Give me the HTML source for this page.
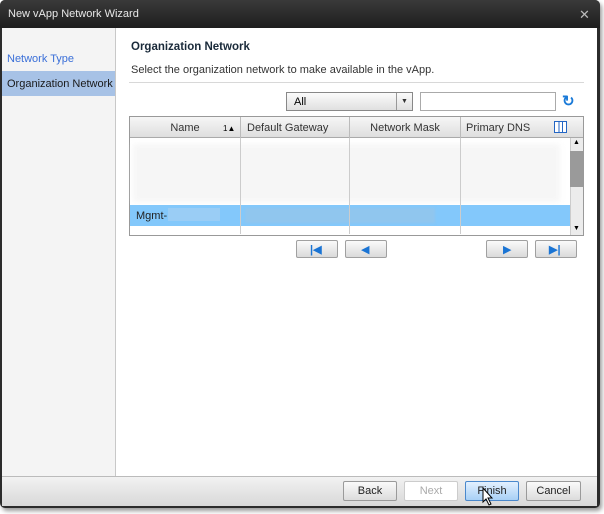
<!DOCTYPE html>
<html><head><style>
*{box-sizing:border-box;margin:0;padding:0}
body{width:604px;height:514px;background:#fff;font-family:"Liberation Sans",sans-serif;font-size:11px;position:relative;overflow:hidden}
.a{position:absolute}
.btn{position:absolute;height:20px;border:1px solid #9a9a9a;border-radius:2px;background:linear-gradient(#fafafa,#dcdcdc);text-align:center;line-height:18px;font-size:11px;color:#222}
.nb{position:absolute;top:240px;width:42px;height:18px;border:1px solid #a0a0a0;border-radius:2px;background:linear-gradient(#fafafa,#dadada)}
.th{position:absolute;top:0;height:21px;line-height:22px;color:#333;text-align:center;border-right:1px solid #bbb}
.vl{position:absolute;top:138px;height:96px;width:1px;background:#ccc}
</style></head><body>
<div class="a" style="left:0;top:0;width:600px;height:508px;background:#2b2b2b;border-radius:5px;box-shadow:2px 3px 4px rgba(0,0,0,.4)"></div>
<div class="a" style="left:0;top:0;width:600px;height:28px;background:linear-gradient(#3a3a3a,#1e1e1e);border-radius:5px 5px 0 0;color:#e8e8e8;font-size:11px;line-height:29px;padding-left:8px">New vApp Network Wizard</div>
<div class="a" style="left:579px;top:7px;color:#bbb;font-size:13px">✕</div>
<div class="a" style="left:2px;top:28px;width:595px;height:448px;background:#fff"></div>
<div class="a" style="left:2px;top:28px;width:114px;height:448px;background:#f4f4f4;border-right:1px solid #c8c8c8"></div>
<div class="a" style="left:7px;top:53px;color:#3a6fd8">Network Type</div>
<div class="a" style="left:2px;top:71px;width:113px;height:25px;background:#a7c2e6;line-height:26px;padding-left:5px;color:#1a1a1a">Organization Network</div>
<div class="a" style="left:131px;top:41px;font-weight:bold;font-size:11.5px;color:#1a2a3a">Organization Network</div>
<div class="a" style="left:131px;top:64px;color:#333">Select the organization network to make available in the vApp.</div>
<div class="a" style="left:129px;top:82px;width:455px;height:1px;background:#d8d8d8"></div>
<div class="a" style="left:286px;top:92px;width:127px;height:19px;border:1px solid #888;background:linear-gradient(#fbfbfb,#e0e0e0);line-height:18px;padding-left:7px">All</div>
<div class="a" style="left:396px;top:93px;width:1px;height:17px;background:#999"></div>
<div class="a" style="left:401px;top:92px;font-size:7px;line-height:19px;color:#333">▼</div>
<div class="a" style="left:420px;top:92px;width:136px;height:19px;border:1px solid #aaa;background:#fff"></div>
<div class="a" style="left:562px;top:92px;color:#1a7ad8;font-weight:bold;font-size:15px">↻</div>
<div class="a" style="left:129px;top:116px;width:455px;height:120px;border:1px solid #999;background:#fff">
 <div class="a" style="left:0;top:0;width:453px;height:21px;background:linear-gradient(#f6f6f6,#dedede);border-bottom:1px solid #aaa"></div>
 <div class="th" style="left:0;width:111px">Name</div>
 <div class="a" style="left:93px;top:1px;line-height:21px;font-size:8px">1▲</div>
 <div class="th" style="left:111px;width:109px;text-align:left;padding-left:6px">Default Gateway</div>
 <div class="th" style="left:220px;width:111px">Network Mask</div>
 <div class="th" style="left:331px;width:122px;border:0;text-align:left;padding-left:5px">Primary DNS</div>
 <div class="a" style="left:424px;top:4px;width:13px;height:12px;border:1px solid #2466c4;background:linear-gradient(90deg,#fff 30%,#2466c4 30%,#2466c4 40%,#fff 40%,#fff 62%,#2466c4 62%,#2466c4 72%,#fff 72%)"></div>
 <div class="a" style="left:3px;top:27px;width:427px;height:58px;background:#f6f6f6;filter:blur(3px)"></div>
 <div class="a" style="left:0;top:88px;width:440px;height:21px;background:#83c8fb"></div>
 <div class="a" style="left:6px;top:89px;line-height:21px;color:#222">Mgmt-</div>
 <div class="a" style="left:38px;top:91px;width:52px;height:13px;background:#9acdf5"></div>
 <div class="a" style="left:115px;top:91px;width:190px;height:15px;background:#90c6ee;filter:blur(1px)"></div>
 <div class="a" style="left:440px;top:21px;width:13px;height:97px;background:#ececec;border-left:1px solid #ccc"></div>
 <div class="a" style="left:440px;top:34px;width:13px;height:36px;background:#9a9a9a"></div>
 <div class="a" style="left:443px;top:22px;font-size:7px">▲</div>
 <div class="a" style="left:443px;top:108px;font-size:7px">▼</div>
</div>
<div class="vl" style="left:240px"></div><div class="vl" style="left:349px"></div><div class="vl" style="left:460px"></div>
<div class="nb" style="left:296px"><span class="a" style="left:13px;top:2px;color:#1a74d4;font-size:11px;font-weight:bold">|◀</span></div>
<div class="nb" style="left:345px"><span class="a" style="left:15px;top:2px;color:#1a74d4;font-size:11px">◀</span></div>
<div class="nb" style="left:486px"><span class="a" style="left:16px;top:2px;color:#1a74d4;font-size:11px">▶</span></div>
<div class="nb" style="left:535px"><span class="a" style="left:13px;top:2px;color:#1a74d4;font-size:11px;font-weight:bold">▶|</span></div>
<div class="a" style="left:2px;top:476px;width:595px;height:30px;background:linear-gradient(#f2f2f2,#d8d8d8);border-top:1px solid #bbb"></div>
<div class="btn" style="left:343px;top:481px;width:54px">Back</div>
<div class="btn" style="left:404px;top:481px;width:54px;background:#fff;border-color:#ccc;color:#aaa">Next</div>
<div class="btn" style="left:465px;top:481px;width:54px;background:linear-gradient(#e2f0ff,#a8d0f5);border-color:#4a88cc">Finish</div>
<div class="btn" style="left:526px;top:481px;width:55px">Cancel</div>
<svg class="a" style="left:482px;top:487px" width="12" height="20"><path d="M1 1 L1 15 L4 12 L7 18 L9 17 L6 11 L10 11 Z" fill="#fff" stroke="#000" stroke-width="1"/></svg>
</body></html>
